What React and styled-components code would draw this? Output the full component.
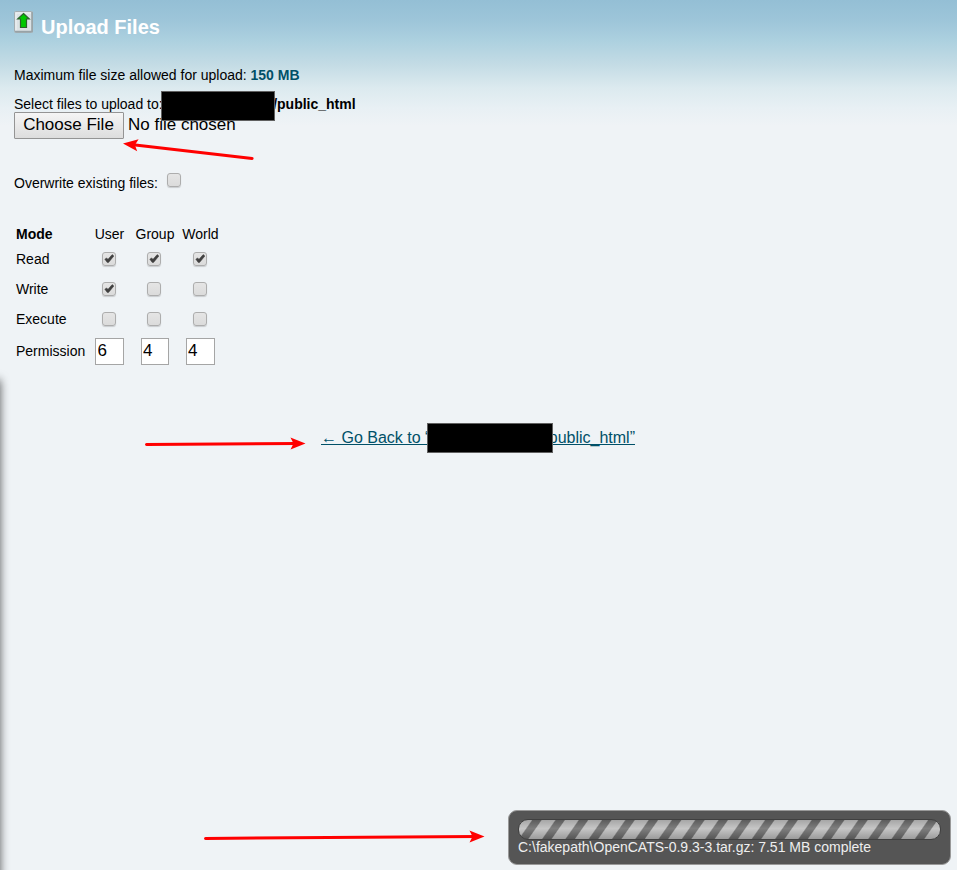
import React from "react";
import styled, { createGlobalStyle } from "styled-components";

const GlobalStyle = createGlobalStyle`
  * { box-sizing: border-box; }
  html, body { margin: 0; padding: 0; }
  body {
    background: #eff3f6;
    font-family: "Liberation Sans", Arial, sans-serif;
    font-size: 14px;
    line-height: 16px;
    color: #000;
    overflow: hidden;
  }
`;

const Page = styled.main`
  position: relative;
  width: 957px;
  height: 870px;
  padding: 11px 14px 0;
  overflow: hidden;
  background: linear-gradient(to bottom, #94bfd5 0, #9dc5d9 20px, #acd0df 40px, #c4dce5 65px, #dceaef 88px, #e8f0f4 108px, #eff3f6 126px) #eff3f6;
`;

const Header = styled.header`
  display: flex;
  align-items: flex-start;
  height: 56px;
`;

const UploadIcon = styled.svg`
  width: 20px;
  height: 22px;
  margin-right: 7px;
`;

const Title = styled.h1`
  margin: 4px 0 0;
  font-size: 20px;
  line-height: 24px;
  font-weight: bold;
  color: #fff;
`;

const Line = styled.p`
  display: flex;
  margin: 0 0 ${(p) => p.$gap || 0}px;
  height: 16px;
  white-space: pre;
`;

const Limit = styled.strong`
  color: #005068;
`;

const Folder = styled.strong`
  margin-left: 110.5px;
`;

const FilePicker = styled.div`
  display: flex;
  gap: 4px;
  height: 27px;
  font-size: 17px;
  line-height: 26px;
`;

const FileButton = styled.button`
  width: 110px;
  height: 27px;
  padding: 0 1px 2px 0;
  border: 1px solid #949494;
  border-radius: 1px;
  background: linear-gradient(#f5f5f5, #dddddd);
  color: #000;
  font: 17px/23px "Liberation Sans", Arial, sans-serif;
  white-space: nowrap;
`;

const Overwrite = styled.label`
  display: flex;
  align-items: flex-start;
  gap: 9px;
  margin: 36px 0 33px;
  height: 16px;
`;

const Box = styled.span`
  display: block;
  flex: none;
  width: 14px;
  height: 14px;
  margin-top: ${(p) => p.$shift || 0}px;
  border: 1px solid #adadad;
  border-radius: 3px;
  background: linear-gradient(#e5e5e5, #dbdbdb);
  box-shadow: 0 1px 1px rgba(0, 0, 0, 0.16);
`;

const Tick = styled.svg`
  display: block;
  width: 12px;
  height: 12px;
`;

const Modes = styled.div`
  display: grid;
  grid-template-columns: 71px 45px 45px 46px;
  grid-template-rows: 20px 30px 30px 30px 34px;
  align-items: center;
  justify-items: center;
  width: 207px;
  margin-left: 2px;
`;

const CheckCell = styled.span`
  width: 15px;
`;

const ColumnLabel = styled.span`
  padding-left: ${(p) => p.$inset || 0}px;
`;

const RowLabel = styled.span`
  justify-self: start;
  font-weight: ${(p) => (p.$bold ? "bold" : "normal")};
`;

const Digit = styled.input`
  width: ${(p) => p.$width}px;
  height: 27px;
  padding: 0 0 0 1.5px;
  border: 1px solid #a5a5a5;
  border-radius: 0;
  background: #fff;
  color: #000;
  font: 17px "Liberation Sans", Arial, sans-serif;
`;

const BackRow = styled.div`
  display: flex;
  height: 20px;
  margin: 60px 0 0 307px;
`;

const BackLink = styled.a`
  display: flex;
  width: 314px;
  justify-content: space-between;
  height: 20px;
  color: #005068;
  font-size: 16px;
  line-height: 20px;
  white-space: pre;
  text-decoration: none;
  background: linear-gradient(#005068, #005068) 0 16px / 100% 1px no-repeat;
`;

const Redaction = styled.div`
  position: absolute;
  left: ${(p) => p.$x}px;
  top: ${(p) => p.$y}px;
  width: ${(p) => p.$w}px;
  height: 30px;
  border: 1px solid #606060;
  background: #000;
`;

const EdgeShadow = styled.div`
  position: absolute;
  left: -10px;
  top: 380px;
  width: 10px;
  height: 520px;
  box-shadow: 0 0 10px rgba(0, 0, 0, 0.65);
`;

const Arrows = styled.svg`
  position: absolute;
  left: 0;
  top: 0;
  width: 957px;
  height: 870px;
  pointer-events: none;
`;

const Toast = styled.aside`
  position: absolute;
  left: 508px;
  top: 810px;
  width: 443px;
  height: 55px;
  padding: 8px 9px;
  border: 1px solid #999;
  border-radius: 9px;
  background: #555;
  color: #eee;
`;

const Progress = styled.div`
  height: 21px;
  border: 1px solid #404040;
  border-radius: 10px;
  background:
    linear-gradient(rgba(0, 0, 0, 0.12), rgba(255, 255, 255, 0.14) 45%, rgba(0, 0, 0, 0.18)),
    repeating-linear-gradient(125deg, #bdbdbd 0 10.2px, #696969 11.4px 18px, #bdbdbd 19.08px);
`;

const Status = styled.div`
  height: 16px;
  margin-top: -1px;
  white-space: nowrap;
`;

function Checkbox({ checked, shift }) {
  return (
    <Box $shift={shift} role="checkbox" aria-checked={!!checked}>
      {checked && (
        <Tick viewBox="0 0 12 12">
          <path d="M1.8 6.2L3.6 4.9L5 6.3L9.2 1.6L10.9 3L5.6 9.4L4.2 9.4Z" fill="#404040" stroke="#404040" strokeWidth="0.5" />
        </Tick>
      )}
    </Box>
  );
}

const modeRows = [
  { name: "Read", values: [true, true, true] },
  { name: "Write", values: [true, false, false] },
  { name: "Execute", values: [false, false, false] },
];

const arrows = [
  { x: 123, y: 143.5, angle: 186.6, length: 130 },
  { x: 305.5, y: 443.5, angle: -0.4, length: 159 },
  { x: 484.5, y: 836.5, angle: -0.4, length: 279 },
];

export default function App() {
  return (
    <>
      <GlobalStyle />
      <Page>
        <Header>
          <UploadIcon viewBox="0 0 20 22">
            <rect x="0.5" y="0.5" width="18" height="21" rx="1" fill="#dce2e5" stroke="#a3adb1" />
            <path d="M2 19.5V2H17" fill="none" stroke="#f0f3f4" />
            <path d="M18 1V20.5H1" fill="none" stroke="#98a2a6" strokeWidth="1.6" />
            <path d="M9.5 2.5L15.3 8H12.5V16.5H6.5V8H3.7Z" fill="#00c800" stroke="#2c622c" strokeWidth="1.2" />
          </UploadIcon>
          <Title>Upload Files</Title>
        </Header>
        <Line $gap={13}>
          Maximum file size allowed for upload: <Limit>150 MB</Limit>
        </Line>
        <Line>
          Select files to upload to:<Folder>/public_html</Folder>
        </Line>
        <FilePicker>
          <FileButton>Choose File</FileButton>
          <span>No file chosen</span>
        </FilePicker>
        <Overwrite>
          Overwrite existing files:
          <Checkbox shift={-2} />
        </Overwrite>
        <Modes>
          <RowLabel $bold>Mode</RowLabel>
          <ColumnLabel>User</ColumnLabel>
          <ColumnLabel $inset={1}>Group</ColumnLabel>
          <ColumnLabel $inset={1}>World</ColumnLabel>
          {modeRows.map((row) => (
            <React.Fragment key={row.name}>
              <RowLabel>{row.name}</RowLabel>
              {row.values.map((v, i) => (
                <CheckCell key={i}>
                  <Checkbox checked={v} />
                </CheckCell>
              ))}
            </React.Fragment>
          ))}
          <RowLabel>Permission</RowLabel>
          <Digit $width={29} defaultValue="6" />
          <Digit $width={28} defaultValue="4" />
          <Digit $width={29} defaultValue="4" />
        </Modes>
        <BackRow>
          <BackLink href="#">
            <span>← Go Back to “</span>
            <span>public_html”</span>
          </BackLink>
        </BackRow>
        <Redaction $x={161} $y={91} $w={114} />
        <Redaction $x={427} $y={423} $w={126} />
        <EdgeShadow />
        <Toast>
          <Progress />
          <Status>C:\fakepath\OpenCATS-0.9.3-3.tar.gz: 7.51 MB complete</Status>
        </Toast>
        <Arrows viewBox="0 0 957 870">
          {arrows.map((a) => (
            <g key={a.y} transform={`translate(${a.x} ${a.y}) rotate(${a.angle})`}>
              <path d={`M${-a.length} 0H-8`} stroke="#f00" strokeWidth="3" strokeLinecap="round" />
              <path d="M0 0L-15 -6L-12 0L-15 6Z" fill="#f00" />
            </g>
          ))}
        </Arrows>
      </Page>
    </>
  );
}
